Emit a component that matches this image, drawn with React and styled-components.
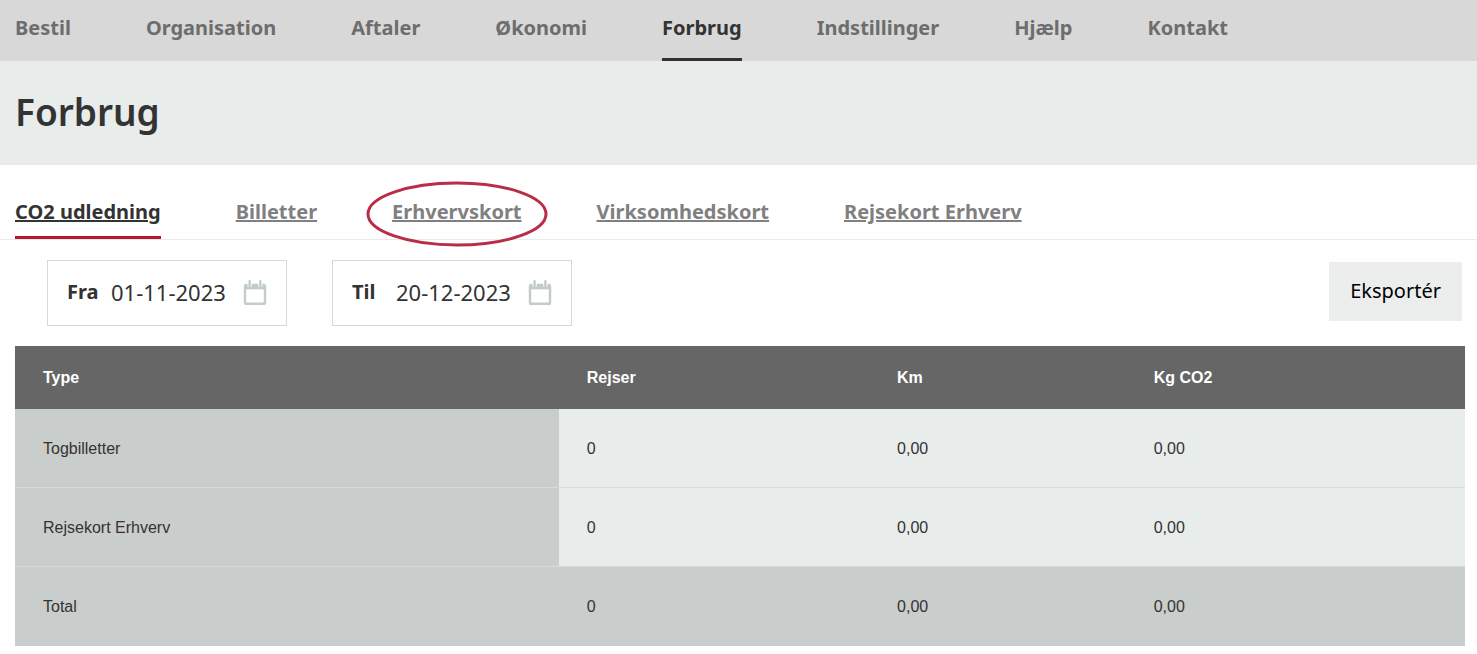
import React, { useState } from "react";
import styled, { createGlobalStyle } from "styled-components";

const GlobalStyle = createGlobalStyle`
  * {
    box-sizing: border-box;
  }
  body {
    margin: 0;
    background: #fff;
    color: #333;
    font-family: "Noto Sans", "Open Sans", sans-serif;
  }
`;

const MainNav = styled.nav`
  display: flex;
  gap: 75px;
  padding: 0 15px;
  background: #d8d8d8;
`;

const NavLink = styled.a`
  padding: 14px 0 16px;
  border-bottom: 3px solid ${({ $active }) => ($active ? "#333" : "transparent")};
  color: ${({ $active }) => ($active ? "#333" : "#6d6d6d")};
  font-size: 20px;
  font-weight: 700;
  line-height: 28px;
  text-decoration: none;
`;

const Hero = styled.header`
  padding: 25px 15px 27px;
  background: #e8eceb;
`;

const Title = styled.h1`
  margin: 0;
  font-size: 37px;
  font-weight: 600;
  line-height: 52px;
`;

const Tabs = styled.nav`
  display: flex;
  gap: 75px;
  padding: 33px 15px 0;
  border-bottom: 1px solid #ebebeb;
`;

const Tab = styled.a`
  position: relative;
  padding-bottom: 10px;
  border-bottom: 3px solid ${({ $active }) => ($active ? "#b41730" : "transparent")};
  color: ${({ $active }) => ($active ? "#333" : "#808080")};
  font-size: 20px;
  font-weight: 700;
  line-height: 28px;
  text-decoration: underline;
  text-decoration-thickness: 2px;
  text-underline-offset: 1px;
`;

const Ring = styled.svg`
  position: absolute;
  top: -17px;
  left: 50%;
  width: 182px;
  height: 66px;
  margin-left: -91px;
  pointer-events: none;
`;

const Toolbar = styled.div`
  display: flex;
  align-items: flex-start;
  gap: 45px;
  padding: 20px 15px 20px 47px;
`;

const DateField = styled.label`
  display: flex;
  align-items: center;
  height: 66px;
  padding: 0 19px 2px;
  border: 1px solid #d6d8d7;
`;

const DateLabel = styled.span`
  width: 44px;
  font-size: 20px;
  font-weight: 700;
  line-height: 28px;
`;

const DateInput = styled.input`
  width: 132px;
  padding: 0;
  border: 0;
  outline: 0;
  background: transparent;
  color: #333;
  font-family: inherit;
  font-size: 22px;
  line-height: 28px;
`;

const ExportButton = styled.button`
  height: 59px;
  margin: 2px 0 0 auto;
  padding: 0 21px 1px;
  border: 0;
  background: #eceeed;
  color: #000;
  font-family: inherit;
  font-size: 20px;
  line-height: 28px;
  cursor: pointer;
`;

const TableWrap = styled.div`
  padding: 0 12px 8px 15px;
`;

const Table = styled.table`
  width: 100%;
  border-collapse: separate;
  border-spacing: 0;
  table-layout: fixed;
  font-family: "Liberation Sans", Arial, sans-serif;
  font-size: 16px;
  line-height: 20px;
  text-align: left;
`;

const HeadCell = styled.th`
  width: ${({ $width }) => $width};
  height: 63px;
  padding: 0 28px;
  background: #666;
  color: #fff;
  font-weight: 700;
`;

const Cell = styled.td`
  height: 79px;
  padding: 1px 28px 0;
  border-bottom: ${({ $last }) => ($last ? "0" : "1px solid #d6dad8")};
  background: ${({ $dark }) => ($dark ? "#c9cdcb" : "#e8eceb")};
  font-weight: 400;
`;

const CalendarIcon = () => (
  <svg width="24" height="26" viewBox="0 0 24 26" aria-hidden="true">
    <rect x="2" y="6" width="20" height="18.8" rx="1.4" fill="none" stroke="#c2cdc8" strokeWidth="2.4" />
    <path d="M2 5h20v5.4H2z" fill="#c2cdc8" />
    <path d="M6.6 2v5.8M17.4 2v5.8" stroke="#fff" strokeWidth="4.2" />
    <path d="M6.6 2.2v5M17.4 2.2v5" stroke="#c2cdc8" strokeWidth="2.4" strokeLinecap="round" />
  </svg>
);

const menu = [
  "Bestil",
  "Organisation",
  "Aftaler",
  "Økonomi",
  "Forbrug",
  "Indstillinger",
  "Hjælp",
  "Kontakt",
];

const tabs = [
  "CO2 udledning",
  "Billetter",
  "Erhvervskort",
  "Virksomhedskort",
  "Rejsekort Erhverv",
];

const columns = [
  { name: "Type", width: "37.5%" },
  { name: "Rejser", width: "21.4%" },
  { name: "Km", width: "17.7%" },
  { name: "Kg CO2", width: "23.4%" },
];

const rows = [
  ["Togbilletter", "0", "0,00", "0,00"],
  ["Rejsekort Erhverv", "0", "0,00", "0,00"],
  ["Total", "0", "0,00", "0,00"],
];

const App = () => {
  const [from, setFrom] = useState("01-11-2023");
  const [to, setTo] = useState("20-12-2023");

  return (
    <>
      <GlobalStyle />
      <MainNav>
        {menu.map((item) => (
          <NavLink key={item} href="#" $active={item === "Forbrug"}>
            {item}
          </NavLink>
        ))}
      </MainNav>
      <Hero>
        <Title>Forbrug</Title>
      </Hero>
      <Tabs>
        {tabs.map((item, i) => (
          <Tab key={item} href="#" $active={i === 0}>
            {item}
            {item === "Erhvervskort" && (
              <Ring viewBox="0 0 182 66" aria-hidden="true">
                <ellipse cx="91" cy="33" rx="89" ry="31" fill="none" stroke="#b92d46" strokeWidth="3" />
              </Ring>
            )}
          </Tab>
        ))}
      </Tabs>
      <Toolbar>
        <DateField htmlFor="from">
          <DateLabel>Fra</DateLabel>
          <DateInput id="from" value={from} onChange={(e) => setFrom(e.target.value)} />
          <CalendarIcon />
        </DateField>
        <DateField htmlFor="to">
          <DateLabel>Til</DateLabel>
          <DateInput id="to" value={to} onChange={(e) => setTo(e.target.value)} />
          <CalendarIcon />
        </DateField>
        <ExportButton type="button">Eksportér</ExportButton>
      </Toolbar>
      <TableWrap>
        <Table>
          <thead>
            <tr>
              {columns.map((col) => (
                <HeadCell key={col.name} scope="col" $width={col.width}>
                  {col.name}
                </HeadCell>
              ))}
            </tr>
          </thead>
          <tbody>
            {rows.map((row, r) => {
              const last = r === rows.length - 1;
              return (
                <tr key={row[0]}>
                  {row.map((value, c) => (
                    <Cell
                      key={c}
                      as={c === 0 ? "th" : "td"}
                      scope={c === 0 ? "row" : undefined}
                      $dark={c === 0 || last}
                      $last={last}
                    >
                      {value}
                    </Cell>
                  ))}
                </tr>
              );
            })}
          </tbody>
        </Table>
      </TableWrap>
    </>
  );
};

export default App;
